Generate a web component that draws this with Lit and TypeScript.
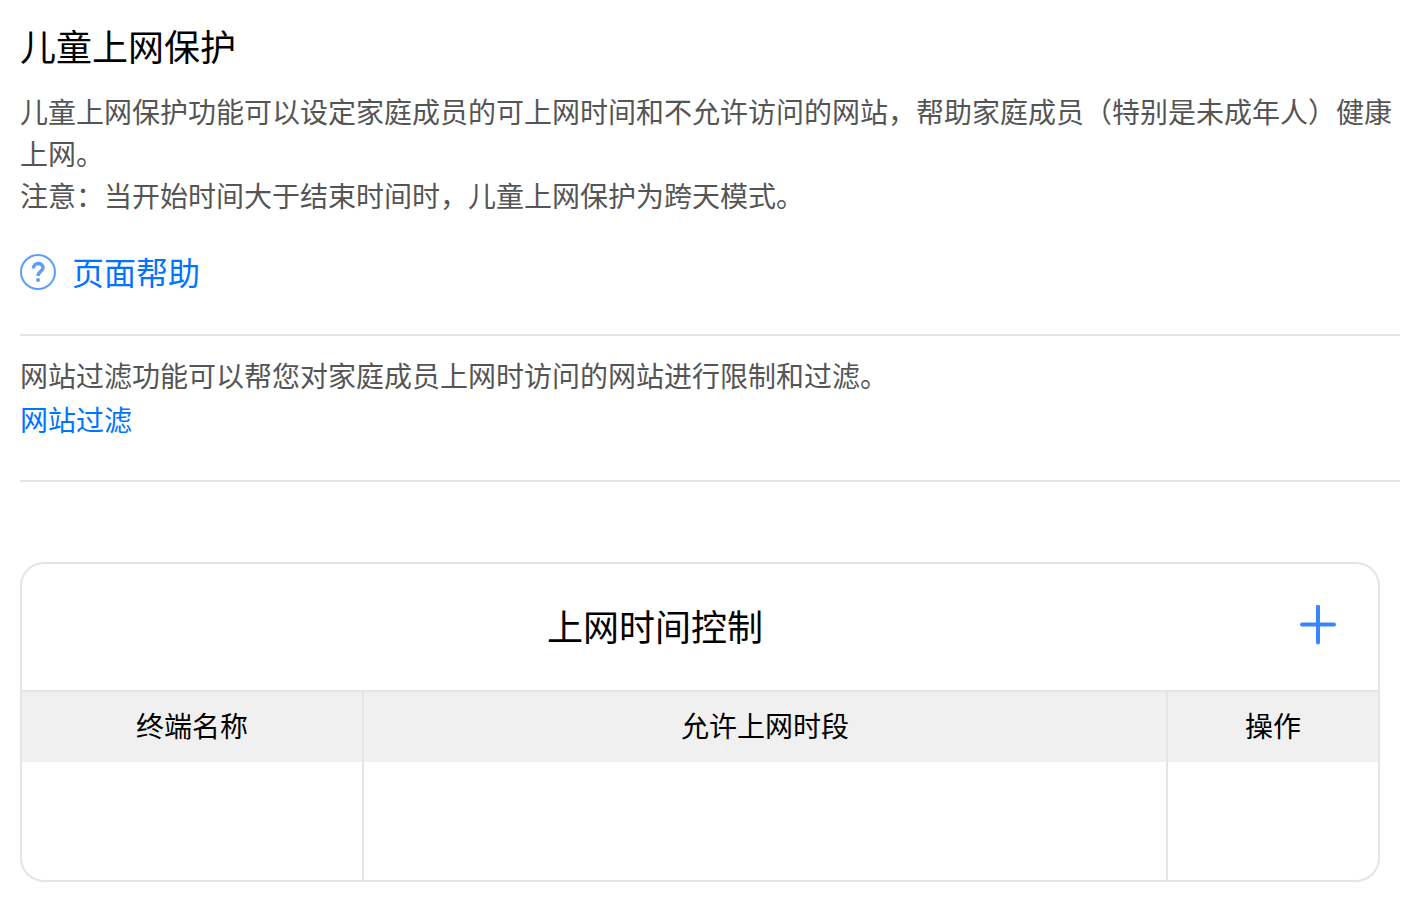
import { LitElement, html, css } from "lit";
import { customElement, state } from "lit/decorators.js";

interface TimeRule {
  device: string;
  period: string;
}

@customElement("app-root")
export class AppRoot extends LitElement {
  static styles = css`
    :host {
      display: block;
      box-sizing: border-box;
      padding: 18px 18px 18px 20px;
      background: #fff;
      color: #000;
      font-family: "Noto Sans CJK SC", sans-serif;
      font-size: 28px;
      line-height: 42px;
    }
    h1,
    h2,
    p {
      margin: 0;
      font-weight: 400;
    }
    h1,
    h2 {
      font-size: 36px;
      line-height: 54px;
    }
    a {
      color: #0073ff;
      text-decoration: none;
    }
    .intro {
      padding-bottom: 36px;
      border-bottom: 2px solid #e5e5e5;
    }
    .text {
      color: #555;
    }
    .intro .text {
      margin-top: 18px;
    }
    .help {
      display: flex;
      width: fit-content;
      align-items: center;
      gap: 16px;
      margin-top: 30px;
      font-size: 32px;
      line-height: 50px;
    }
    .help span {
      padding-bottom: 2px;
    }
    .help svg {
      width: 36px;
      height: 36px;
    }
    .filter {
      padding: 18px 0 40px;
      border-bottom: 2px solid #e5e5e5;
    }
    .filter a {
      display: block;
      width: fit-content;
      margin-top: 2px;
    }
    .card {
      margin: 80px 20px 0 0;
      border: 2px solid #e5e5e5;
      border-radius: 24px;
      overflow: hidden;
    }
    .head {
      display: flex;
      align-items: center;
      gap: 10px;
      padding: 34px 40px 38px 0;
    }
    .head h2 {
      flex: 1;
      text-align: center;
    }
    .add {
      display: flex;
      padding: 0;
      border: 0;
      background: none;
      cursor: pointer;
    }
    .add svg {
      width: 40px;
      height: 40px;
    }
    table {
      width: 100%;
      table-layout: fixed;
      border-collapse: separate;
      border-spacing: 0;
    }
    .device {
      width: 340px;
    }
    .action {
      width: 212px;
    }
    th {
      box-sizing: border-box;
      height: 72px;
      padding: 0 0 4px;
      background: #f0f0f0;
      border-top: 2px solid #e5e5e5;
      font-weight: 400;
    }
    td {
      height: 118px;
      padding: 0;
      text-align: center;
    }
    th + th,
    td + td {
      border-left: 2px solid #e5e5e5;
    }
  `;

  @state() private rules: TimeRule[] = [{ device: "", period: "" }];

  render() {
    return html`
      <section class="intro">
        <h1>儿童上网保护</h1>
        <p class="text">
          儿童上网保护功能可以设定家庭成员的可上网时间和不允许访问的网站，帮助家庭成员（特别是未成年人）健康上网。<br />注意：当开始时间大于结束时间时，儿童上网保护为跨天模式。
        </p>
        <a class="help" href="#help">
          <svg viewBox="0 0 36 36" fill="none" stroke="#5c9ffb" aria-hidden="true">
            <circle cx="18" cy="18" r="17" stroke-width="2" />
            <path d="M13.500 14.500c0-6.500 9.500-6.500 9.500-.8 0 3.800-5 3.800-5 8.300" stroke-width="3.500" />
            <circle cx="18" cy="26" r="2" fill="#5c9ffb" stroke="none" />
          </svg>
          <span>页面帮助</span>
        </a>
      </section>
      <section class="filter">
        <p class="text">网站过滤功能可以帮您对家庭成员上网时访问的网站进行限制和过滤。</p>
        <a href="#filter">网站过滤</a>
      </section>
      <section class="card">
        <div class="head">
          <h2>上网时间控制</h2>
          <button class="add" type="button" aria-label="添加">
            <svg viewBox="0 0 40 40" fill="none" stroke="#3a86ff" stroke-width="4" stroke-linecap="round" aria-hidden="true">
              <path d="M20 1.500v36M4 19.500h32" />
            </svg>
          </button>
        </div>
        <table>
          <colgroup>
            <col class="device" />
            <col />
            <col class="action" />
          </colgroup>
          <thead>
            <tr>
              <th scope="col">终端名称</th>
              <th scope="col">允许上网时段</th>
              <th scope="col">操作</th>
            </tr>
          </thead>
          <tbody>
            ${this.rules.map(
              (rule) => html`<tr>
                <td>${rule.device}</td>
                <td>${rule.period}</td>
                <td></td>
              </tr>`
            )}
          </tbody>
        </table>
      </section>
    `;
  }
}
